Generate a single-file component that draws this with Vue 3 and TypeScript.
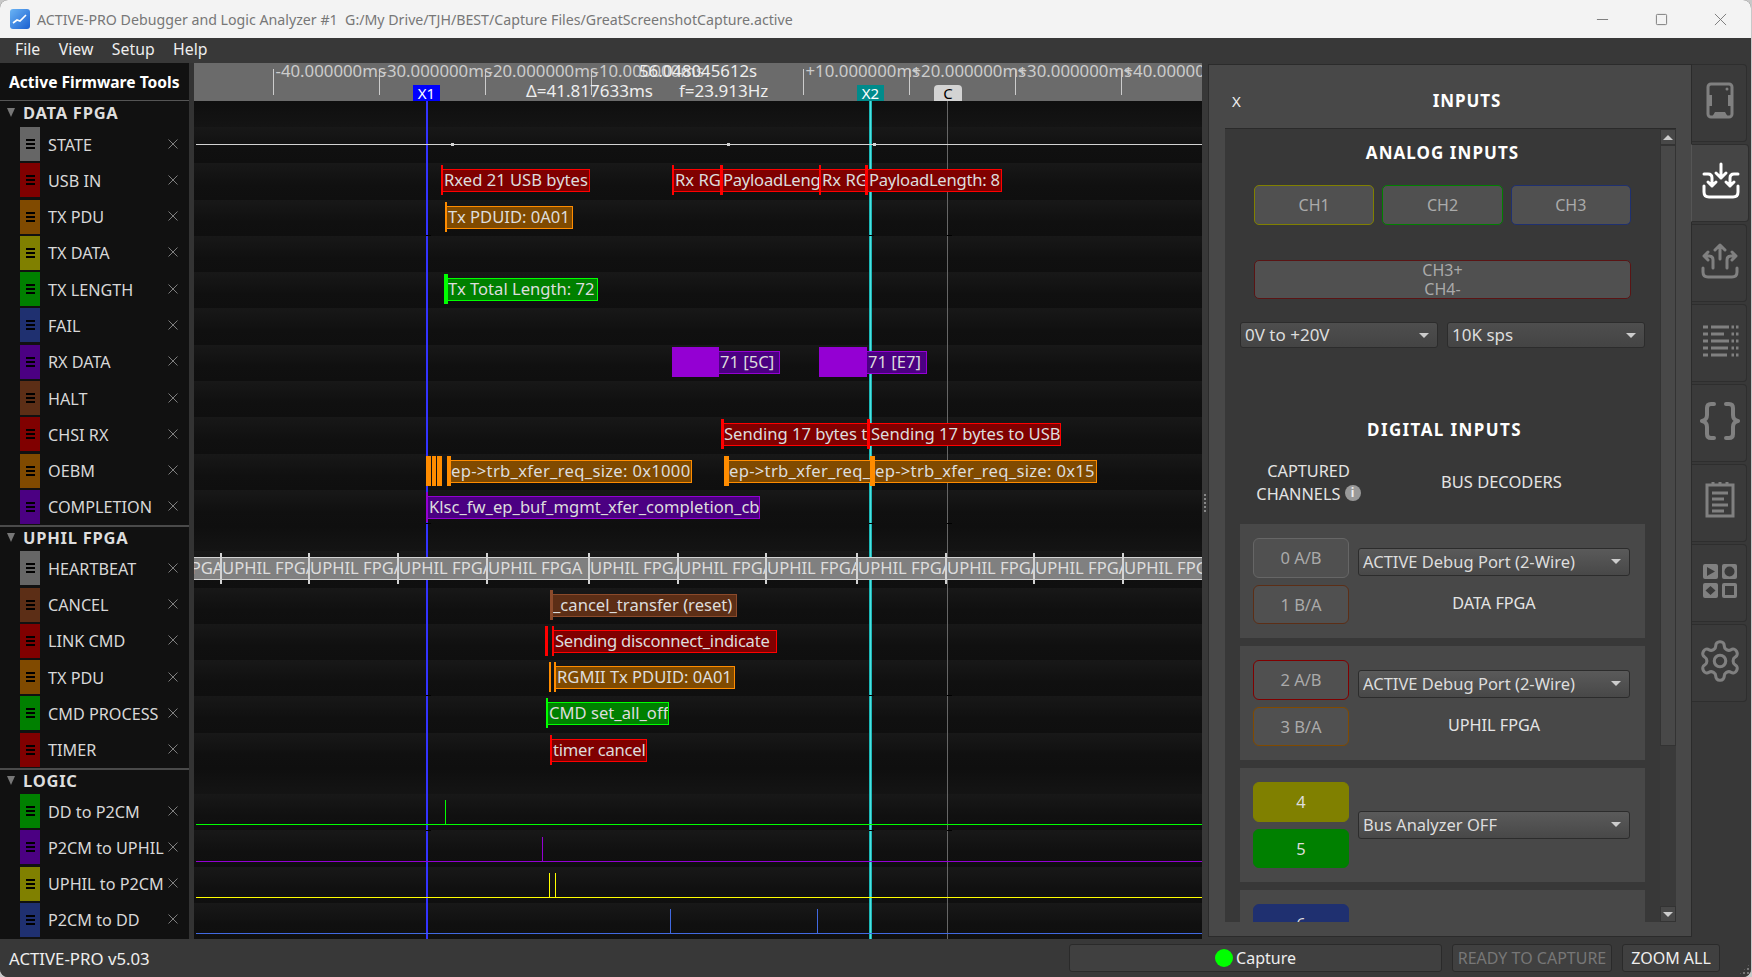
<script setup lang="ts">
type Kind = 'grey' | 'red' | 'orange' | 'olive' | 'green' | 'blue' | 'purple' | 'brown';

interface Box { x: number; end: number; text: string; fit?: 'loose' | 'tight' }
interface Lane {
  name: string;
  kind: Kind;
  marks?: [number, number][];
  boxes?: Box[];
  solids?: [number, number][];
  band?: boolean;
  line?: number;
  spikes?: number[];
}

const LEFT = 194;

const groups: { title: string; lanes: Lane[] }[] = [
  {
    title: 'DATA FPGA',
    lanes: [
      { name: 'STATE', kind: 'grey', line: 17 },
      {
        name: 'USB IN',
        kind: 'red',
        marks: [[441, 2], [672, 2], [720, 3], [819, 2], [865, 3]],
        boxes: [
          { x: 442, end: 590, text: 'Rxed 21 USB bytes' },
          { x: 673, end: 721, text: 'Rx RGMII' },
          { x: 721, end: 820, text: 'PayloadLength: 8', fit: 'tight' },
          { x: 820, end: 866, text: 'Rx RGMII' },
          { x: 867, end: 1002, text: 'PayloadLength: 8', fit: 'tight' },
        ],
      },
      {
        name: 'TX PDU',
        kind: 'orange',
        marks: [[445, 2]],
        boxes: [{ x: 446, end: 573, text: 'Tx PDUID: 0A01' }],
      },
      { name: 'TX DATA', kind: 'olive' },
      {
        name: 'TX LENGTH',
        kind: 'green',
        marks: [[444, 4]],
        boxes: [{ x: 446, end: 598, text: 'Tx Total Length: 72' }],
      },
      { name: 'FAIL', kind: 'blue' },
      {
        name: 'RX DATA',
        kind: 'purple',
        solids: [[672, 47], [819, 48]],
        boxes: [
          { x: 718, end: 780, text: '71 [5C]' },
          { x: 866, end: 927, text: '71 [E7]' },
        ],
      },
      { name: 'HALT', kind: 'brown' },
      {
        name: 'CHSI RX',
        kind: 'red',
        marks: [[721, 3], [867, 3]],
        boxes: [
          { x: 722, end: 868, text: 'Sending 17 bytes to USB' },
          { x: 869, end: 1061, text: 'Sending 17 bytes to USB' },
        ],
      },
      {
        name: 'OEBM',
        kind: 'orange',
        marks: [[447, 4], [724, 5], [870, 5]],
        solids: [[426, 5], [432, 4], [437, 5]],
        boxes: [
          { x: 449, end: 692, text: 'ep->trb_xfer_req_size: 0x1000', fit: 'loose' },
          { x: 727, end: 871, text: 'ep->trb_xfer_req_size: 0x15', fit: 'loose' },
          { x: 873, end: 1097, text: 'ep->trb_xfer_req_size: 0x15', fit: 'loose' },
        ],
      },
      {
        name: 'COMPLETION',
        kind: 'purple',
        marks: [[426, 2]],
        boxes: [{ x: 427, end: 760, text: 'Klsc_fw_ep_buf_mgmt_xfer_completion_cb' }],
      },
    ],
  },
  {
    title: 'UPHIL FPGA',
    lanes: [
      { name: 'HEARTBEAT', kind: 'grey', band: true },
      {
        name: 'CANCEL',
        kind: 'brown',
        marks: [[550, 3]],
        boxes: [{ x: 551, end: 737, text: '_cancel_transfer (reset)' }],
      },
      {
        name: 'LINK CMD',
        kind: 'red',
        marks: [[545, 3], [552, 2]],
        boxes: [{ x: 553, end: 777, text: 'Sending disconnect_indicate', fit: 'tight' }],
      },
      {
        name: 'TX PDU',
        kind: 'orange',
        marks: [[549, 2], [554, 2]],
        boxes: [{ x: 555, end: 735, text: 'RGMII Tx PDUID: 0A01' }],
      },
      {
        name: 'CMD PROCESS',
        kind: 'green',
        marks: [[546, 2]],
        boxes: [{ x: 547, end: 669, text: 'CMD set_all_off' }],
      },
      {
        name: 'TIMER',
        kind: 'red',
        marks: [[550, 2]],
        boxes: [{ x: 551, end: 647, text: 'timer cancel', fit: 'tight' }],
      },
    ],
  },
  {
    title: 'LOGIC',
    lanes: [
      { name: 'DD to P2CM', kind: 'green', line: 30, spikes: [445] },
      { name: 'P2CM to UPHIL', kind: 'purple', line: 31, spikes: [542] },
      { name: 'UPHIL to P2CM', kind: 'olive', line: 30, spikes: [549, 555] },
      { name: 'P2CM to DD', kind: 'blue', line: 30, spikes: [670, 817] },
    ],
  },
];

const rulerTicks = [
  { x: 272.5, label: '-40.000000ms' },
  { x: 378.5, label: '-30.000000ms' },
  { x: 484.5, label: '-20.000000ms' },
  { x: 590.5, label: '-10.000000ms' },
  { x: 802.5, label: '+10.000000ms' },
  { x: 908.5, label: '+20.000000ms' },
  { x: 1014.5, label: '+30.000000ms' },
  { x: 1120.5, label: '+40.000000ms' },
];

const stateDots = [451, 727, 873];
const bandTicks = [127, 220, 308, 397, 486, 588, 677, 765, 856, 945, 1033, 1122];
const nicks = [172, 460, 632, 767];
const cursorXs = [426, 869, 947];

const at = (x: number) => ({ left: `${x - LEFT}px` });
const span = (x: number, w: number) => ({ left: `${x - LEFT}px`, width: `${w}px` });
</script>

<template>
  <div class="window">
    <header class="titlebar">
      <svg class="app-icon" viewBox="0 0 20 20">
        <defs>
          <linearGradient id="appBlue" x1="0" y1="0" x2="1" y2="1">
            <stop offset="0" stop-color="#6ab4f5" />
            <stop offset="1" stop-color="#1a5fd0" />
          </linearGradient>
        </defs>
        <rect width="20" height="20" rx="3" fill="url(#appBlue)" />
        <path d="M3 14 L7 11 L10 12 L16 6" fill="none" stroke="#fff" stroke-width="1.6" />
      </svg>
      <span class="title-text">ACTIVE-PRO Debugger and Logic Analyzer #1&nbsp; G:/My Drive/TJH/BEST/Capture Files/GreatScreenshotCapture.active</span>
      <div class="win-buttons">
        <svg viewBox="0 0 14 14" class="win-btn"><path d="M1 7 H13" /></svg>
        <svg viewBox="0 0 14 14" class="win-btn"><rect x="1.5" y="1.5" width="11" height="11" rx="1" /></svg>
        <svg viewBox="0 0 14 14" class="win-btn"><path d="M1 1 L13 13 M13 1 L1 13" /></svg>
      </div>
    </header>

    <nav class="menubar">
      <span>File</span><span>View</span><span>Setup</span><span>Help</span>
    </nav>

    <div class="workspace">
      <aside class="channels">
        <div class="channels-head">Active Firmware Tools</div>
        <section v-for="g in groups" :key="g.title" class="group">
          <div class="group-head"><i class="tri"></i>{{ g.title }}</div>
          <div v-for="l in g.lanes" :key="l.name" class="channel">
            <div class="swatch" :class="`sw-${l.kind}`"><i></i><i></i><i></i></div>
            <span class="channel-name">{{ l.name }}</span>
            <span class="channel-x">
              <svg viewBox="0 0 10 10"><path d="M0.5 0.5 L9.5 9.5 M9.5 0.5 L0.5 9.5" /></svg>
            </span>
          </div>
        </section>
      </aside>
      <div class="splitter"></div>

      <main class="timeline">
        <div class="ruler">
          <template v-for="t in rulerTicks" :key="t.x">
            <i class="tick" :style="at(t.x)"></i>
            <span class="tick-label" :style="at(t.x + 3)">{{ t.label }}</span>
          </template>
          <span class="readout r-center">56.048045612s</span>
          <span class="readout r-delta">Δ=41.817633ms</span>
          <span class="readout r-freq">f=23.913Hz</span>
          <span class="flag flag-x1">X1</span>
          <span class="flag flag-x2">X2</span>
          <span class="flag flag-c">C</span>
        </div>

        <i class="cursor cursor-x1"></i>
        <i class="cursor cursor-x2"></i>
        <i class="cursor cursor-c"></i>
        <template v-for="c in cursorXs" :key="c">
          <i v-for="n in nicks" :key="n" class="nick" :style="{ ...at(c), top: `${n}px` }"></i>
        </template>

        <section v-for="g in groups" :key="g.title">
          <div class="lane-spacer"></div>
          <div v-for="l in g.lanes" :key="l.name + g.title" class="lane" :class="`k-${l.kind}`">
            <i v-if="l.line !== undefined" class="trace" :style="{ top: `${l.line}px` }"></i>
            <template v-if="l.name === 'STATE'">
              <i v-for="d in stateDots" :key="d" class="dot" :style="at(d)"></i>
            </template>
            <i
              v-for="s in l.spikes"
              :key="s"
              class="spike"
              :style="{ ...at(s), top: `${(l.line ?? 29) - 24}px` }"
            ></i>
            <i v-for="s in l.solids" :key="s[0]" class="solid" :style="span(s[0], s[1])"></i>
            <div
              v-for="b in l.boxes"
              :key="b.x"
              class="box"
              :class="b.fit"
              :style="span(b.x, b.end - b.x)"
            >{{ b.text }}</div>
            <i v-for="m in l.marks" :key="m[0]" class="mark" :style="span(m[0], m[1])"></i>
            <template v-if="l.band">
              <div
                v-for="(t, i) in bandTicks"
                :key="t"
                class="band-cell"
                :style="span(t, (bandTicks[i + 1] ?? 1300) - t)"
              >UPHIL FPGA</div>
              <i v-for="t in bandTicks.slice(1)" :key="t" class="band-tick" :style="at(t)"></i>
            </template>
          </div>
        </section>
      </main>

      <div class="gutter"><i class="grip"></i></div>

      <section class="panel">
        <div class="panel-head">
          <span class="panel-x">X</span>
          <span class="panel-title">INPUTS</span>
        </div>
        <div class="scroller">
          <div class="scroll-body">
            <h3 class="section-title analog-title">ANALOG INPUTS</h3>
            <div class="ch-row">
              <button class="ch ch-olive">CH1</button>
              <button class="ch ch-green">CH2</button>
              <button class="ch ch-blue">CH3</button>
            </div>
            <button class="ch ch-diff">CH3+<br />CH4-</button>
            <div class="select-row">
              <div class="select">0V to +20V</div>
              <div class="select">10K sps</div>
            </div>

            <h3 class="section-title digital-title">DIGITAL INPUTS</h3>
            <div class="digital-head">
              <div class="captured">
                CAPTURED<br />CHANNELS <span class="info">i</span>
              </div>
              <div class="decoders">BUS DECODERS</div>
            </div>

            <div class="card">
              <div class="pins">
                <button class="pin pin-grey">0 A/B</button>
                <button class="pin pin-brown">1 B/A</button>
              </div>
              <div class="decoder">
                <div class="select wide">ACTIVE Debug Port (2-Wire)</div>
                <div class="decoder-name">DATA FPGA</div>
              </div>
            </div>
            <div class="card">
              <div class="pins">
                <button class="pin pin-red">2 A/B</button>
                <button class="pin pin-orange">3 B/A</button>
              </div>
              <div class="decoder">
                <div class="select wide">ACTIVE Debug Port (2-Wire)</div>
                <div class="decoder-name">UPHIL FPGA</div>
              </div>
            </div>
            <div class="card">
              <div class="pins">
                <button class="pin on-olive">4</button>
                <button class="pin on-green">5</button>
              </div>
              <div class="decoder centered">
                <div class="select wide">Bus Analyzer OFF</div>
              </div>
            </div>
            <div class="card">
              <div class="pins">
                <button class="pin on-blue">6</button>
                <button class="pin on-blue">7</button>
              </div>
            </div>
          </div>
          <div class="scrollbar">
            <div class="sb-btn"><i class="sb-up"></i></div>
            <div class="sb-thumb"></div>
            <div class="sb-track"></div>
            <div class="sb-btn"><i class="sb-down"></i></div>
          </div>
        </div>
      </section>

      <div class="tabs">
        <div class="tab">
          <svg viewBox="0 0 40 40" class="icon">
            <rect x="8" y="3" width="24" height="33" rx="3" class="st" />
            <path d="M8 14 H12 V25 H8 Z M32 14 H28 V25 H32 Z M12 36 L15 31 H25 L28 36 Z" class="fl" />
            <circle cx="27" cy="8" r="1.5" class="fl" />
          </svg>
        </div>
        <div class="tab active">
          <svg viewBox="0 0 40 40" class="icon">
            <path
              d="M20 3 V17 M15 12 L20 17 L25 12 M3 13 H7 Q11 13 11 17 V25 M7 21 L11 25 L15 21 M37 13 H33 Q29 13 29 17 V25 M25 21 L29 25 L33 21 M3 25 V31 Q3 36 8 36 H32 Q37 36 37 31 V25"
              class="st"
            />
          </svg>
        </div>
        <div class="tab">
          <svg viewBox="0 0 40 40" class="icon">
            <path
              d="M20 18 V4 M15 9 L20 4 L25 9 M13 27 V19 Q13 15 9 15 H4 M8 11 L4 15 L8 19 M27 27 V19 Q27 15 31 15 H36 M32 11 L36 15 L32 19 M3 27 V31 Q3 36 8 36 H32 Q37 36 37 31 V27"
              class="st"
            />
          </svg>
        </div>
        <div class="tab">
          <svg viewBox="0 0 40 40" class="icon">
            <path
              d="M3 6 H8 M11 6 H29 M31.5 6 H34 M36 6 H38.5 M3 13 H8 M11 13 H24 M31.5 13 H34 M36 13 H38.5 M3 20 H8 M11 20 H29 M31.5 20 H34 M36 20 H38.5 M3 27 H8 M11 27 H28 M31.5 27 H34 M36 27 H38.5 M3 34 H8 M11 34 H27 M31.5 34 H34 M36 34 H38.5"
              class="st butt"
            />
          </svg>
        </div>
        <div class="tab">
          <svg viewBox="0 0 40 40" class="icon">
            <path
              d="M14 3 H11 Q7 3 7 7 V14 Q7 19 2 20 Q7 21 7 26 V33 Q7 37 11 37 H14 M26 3 H29 Q33 3 33 7 V14 Q33 19 38 20 Q33 21 33 26 V33 Q33 37 29 37 H26"
              class="st thick"
            />
          </svg>
        </div>
        <div class="tab">
          <svg viewBox="0 0 40 40" class="icon note">
            <rect x="7" y="6" width="26" height="31" class="st butt" />
            <path d="M13 3 V7 M20 3 V7 M27 3 V7 M12 14 H28 M12 20 H24 M12 26 H28 M12 32 H24" class="st butt" />
          </svg>
        </div>
        <div class="tab">
          <svg viewBox="0 0 40 40" class="icon">
            <rect x="3" y="3" width="15" height="15" rx="2" class="fl" />
            <rect x="22" y="3" width="15" height="15" rx="2" class="fl" />
            <rect x="3" y="22" width="15" height="15" rx="2" class="fl" />
            <rect x="22" y="22" width="15" height="15" rx="2" class="fl" />
            <path d="M7 6 L15 10.5 L7 15 Z M10.5 25 L15.5 29.5 L10.5 34 L5.5 29.5 Z" class="cut" />
            <circle cx="29.5" cy="10.5" r="5" class="cut" />
            <rect x="25" y="25" width="9" height="9" class="cut" />
          </svg>
        </div>
        <div class="tab">
          <svg viewBox="0 0 24 24" class="icon gear">
            <path
              d="M12.22 2h-.44a2 2 0 0 0-2 2v.18a2 2 0 0 1-1 1.73l-.43.25a2 2 0 0 1-2 0l-.15-.08a2 2 0 0 0-2.73.73l-.22.38a2 2 0 0 0 .73 2.73l.15.1a2 2 0 0 1 1 1.72v.51a2 2 0 0 1-1 1.74l-.15.09a2 2 0 0 0-.73 2.73l.22.38a2 2 0 0 0 2.73.73l.15-.08a2 2 0 0 1 2 0l.43.25a2 2 0 0 1 1 1.73V20a2 2 0 0 0 2 2h.44a2 2 0 0 0 2-2v-.18a2 2 0 0 1 1-1.73l.43-.25a2 2 0 0 1 2 0l.15.08a2 2 0 0 0 2.73-.73l.22-.39a2 2 0 0 0-.73-2.73l-.15-.08a2 2 0 0 1-1-1.74v-.5a2 2 0 0 1 1-1.74l.15-.09a2 2 0 0 0 .73-2.73l-.22-.38a2 2 0 0 0-2.73-.73l-.15.08a2 2 0 0 1-2 0l-.43-.25a2 2 0 0 1-1-1.73V4a2 2 0 0 0-2-2z"
              class="st"
            />
            <circle cx="12" cy="12" r="3" class="st" />
          </svg>
        </div>
      </div>
    </div>

    <footer class="statusbar">
      <span class="version">ACTIVE-PRO v5.03</span>
      <button class="capture"><i class="led"></i>Capture</button>
      <button class="ready">READY TO CAPTURE</button>
      <button class="zoomall">ZOOM ALL</button>
      <i class="resize-grip"></i>
    </footer>
  </div>
</template>

<style scoped>
.window {
  display: flex;
  flex-direction: column;
  width: 1751px;
  height: 977px;
  overflow: hidden;
  font-family: "Noto Sans", "Liberation Sans", sans-serif;
  font-size: 16.2px;
  color: #d8d8d8;
  background: #383838;
  border-radius: 8px;
}

.titlebar {
  display: flex;
  flex: none;
  align-items: center;
  height: 38px;
  padding-left: 10px;
  color: #777;
  background: #f3f3f3;
}

.app-icon {
  width: 20px;
  height: 20px;
  margin-right: 7px;
}

.title-text {
  font-size: 14.2px;
  white-space: nowrap;
}

.win-buttons {
  display: flex;
  gap: 46px;
  align-items: center;
  margin-left: auto;
  margin-right: 24px;
}

.win-btn {
  width: 13px;
  height: 13px;
  fill: none;
  stroke: #777;
  stroke-width: 1;
}

.menubar {
  display: flex;
  flex: none;
  gap: 18.5px;
  align-items: center;
  height: 25px;
  padding-left: 15px;
  padding-bottom: 4px;
  box-sizing: border-box;
  font-size: 15.8px;
  color: #eee;
  background: #383838;
}

.workspace {
  display: flex;
  flex: none;
  height: 876px;
  overflow: hidden;
}

.channels {
  flex: none;
  width: 189px;
  background: #111;
}

.channels-head {
  display: flex;
  align-items: center;
  height: 38px;
  padding-left: 9px;
  font-size: 15.6px;
  font-weight: 700;
  color: #fff;
  white-space: nowrap;
  border-bottom: 1px solid #555;
  box-sizing: border-box;
}

.group-head {
  display: flex;
  align-items: center;
  height: 25px;
  padding-left: 7px;
  padding-bottom: 2px;
  font-size: 16.5px;
  font-weight: 700;
  color: #ddd;
  letter-spacing: 0.75px;
  box-sizing: border-box;
}

.group + .group .group-head {
  border-top: 2px solid #4a4a4a;
}

.tri {
  width: 0;
  height: 0;
  margin-right: 8px;
  border-top: 9px solid #777;
  border-right: 4px solid transparent;
  border-left: 4px solid transparent;
}

.channel {
  display: flex;
  align-items: flex-start;
  height: 36.3px;
  padding-left: 20px;
  box-sizing: border-box;
}

.swatch {
  display: flex;
  flex: none;
  flex-direction: column;
  gap: 2px;
  align-items: center;
  justify-content: center;
  width: 20px;
  height: 34px;
  margin-top: 1px;
}

.swatch i {
  display: block;
  width: 9px;
  height: 2px;
  background: #000;
}

.sw-grey { background: #666; }
.sw-red { background: #800000; }
.sw-orange { background: #804a00; }
.sw-olive { background: #808000; }
.sw-green { background: #008000; }
.sw-blue { background: #1f3070; }
.sw-purple { background: #4b0082; }
.sw-brown { background: #5c2e16; }

.channel-name {
  flex: 1;
  margin-top: 7.5px;
  margin-left: 8px;
  white-space: nowrap;
}

.channel-x {
  display: flex;
  flex: none;
  align-items: center;
  width: 10px;
  height: 35px;
  margin-right: 11px;
}

.channel-x svg {
  width: 10px;
  height: 10px;
  fill: none;
  stroke: #7e7e7e;
  stroke-width: 1;
}

.splitter {
  flex: none;
  width: 5px;
  background: #333;
}

.timeline {
  position: relative;
  flex: none;
  width: 1008px;
  overflow: hidden;
  background: #111;
}

.ruler {
  position: relative;
  z-index: 4;
  height: 38px;
  overflow: hidden;
  font-size: 16.8px;
  background: #6b6b6b;
}

.tick {
  position: absolute;
  top: 6px;
  width: 1px;
  height: 26px;
  background: #ccc;
}

.tick-label {
  position: absolute;
  top: -4px;
  color: #ccc;
  white-space: nowrap;
}

.readout {
  position: absolute;
  color: #eee;
  white-space: nowrap;
}

.r-center { top: -4px; left: 445px; }
.r-delta { top: 16px; left: 332px; font-size: 17px; }
.r-freq { top: 16px; left: 485px; font-size: 17px; }

.flag {
  position: absolute;
  top: 22px;
  height: 16px;
  font-size: 15px;
  line-height: 17px;
  text-align: center;
  color: #fff;
}

.flag-x1 { left: 219px; width: 27px; background: #00f; }
.flag-x2 { left: 663px; width: 27px; background: #008b8b; }
.flag-c {
  left: 740px;
  width: 28px;
  color: #000;
  background: #d3d3d3;
  border-radius: 4px 4px 0 0;
}

.cursor {
  position: absolute;
  top: 38px;
  bottom: 0;
  z-index: 1;
}

.cursor-x1 { left: 232px; width: 2px; background: #33f; }
.cursor-x2 {
  left: 675px;
  width: 3px;
  background: linear-gradient(90deg, #00a0a0, #4fe0e0, #00a0a0);
}
.cursor-c { left: 753px; width: 1px; background: #666; }

.nick {
  position: absolute;
  z-index: 1;
  width: 5px;
  height: 1px;
  background: #000;
}

.lane-spacer {
  height: 26px;
  background: linear-gradient(#0f0f0f, #141414);
}

section + section .lane-spacer {
  height: 25px;
}

.lane {
  position: relative;
  height: 36.3px;
  background: linear-gradient(#181818, #101010 60%, #0f0f0f);
}

.trace {
  position: absolute;
  right: 0;
  left: 2px;
  z-index: 2;
  height: 1px;
}

.k-grey .trace { background: #d3d3d3; }
.k-green .trace, .k-green .spike { background: #0f0; }
.k-purple .trace, .k-purple .spike { background: #9400d3; }
.k-olive .trace, .k-olive .spike { background: #ff0; }
.k-blue .trace, .k-blue .spike { background: #4169e1; }

.dot {
  position: absolute;
  top: 16px;
  z-index: 2;
  width: 3px;
  height: 3px;
  background: #d3d3d3;
}

.spike {
  position: absolute;
  z-index: 2;
  width: 1px;
  height: 24px;
}

.box {
  position: absolute;
  top: 6px;
  z-index: 2;
  box-sizing: border-box;
  height: 23px;
  padding-left: 1px;
  overflow: hidden;
  font-size: 16.6px;
  line-height: 19px;
  color: #ddd;
  white-space: nowrap;
  border: 1px solid;
}

.box.loose { letter-spacing: 0.3px; }
.box.tight { letter-spacing: -0.25px; }

.mark {
  position: absolute;
  top: 2px;
  z-index: 3;
  height: 30px;
}

.solid {
  position: absolute;
  top: 2px;
  z-index: 2;
  height: 30px;
}

.k-red .box { background: #800000; border-color: #f00; }
.k-red .mark { background: #f00; }
.k-orange .box { background: #804a00; border-color: #ff8c00; }
.k-orange .mark, .k-orange .solid { background: #ff8c00; }
.k-green .box { background: #008000; border-color: #0f0; }
.k-green .mark { background: #0f0; }
.k-purple .box { background: #4b0082; border-color: #9400d3; }
.k-purple .mark, .k-purple .solid { background: #9400d3; }
.k-brown .box { background: #5c2e16; border-color: #8b4a2b; }
.k-brown .mark { background: #8b4a2b; }

.band-cell {
  position: absolute;
  top: 6px;
  z-index: 2;
  box-sizing: border-box;
  height: 23px;
  padding-left: 2px;
  overflow: hidden;
  font-size: 16.6px;
  line-height: 19px;
  color: #ddd;
  white-space: nowrap;
  background: #808080;
  border-top: 1px solid #d3d3d3;
  border-bottom: 1px solid #d3d3d3;
}

.band-tick {
  position: absolute;
  top: 2px;
  z-index: 3;
  width: 2px;
  height: 31px;
  background: #d3d3d3;
}

.gutter {
  position: relative;
  flex: none;
  width: 6px;
}

.grip {
  position: absolute;
  top: 431px;
  left: 2px;
  width: 2px;
  height: 18px;
  background: repeating-linear-gradient(#888 0 2px, transparent 2px 4px);
}

.panel {
  display: flex;
  flex: none;
  flex-direction: column;
  box-sizing: border-box;
  width: 484px;
  height: 873px;
  margin-top: 1px;
  padding: 0 15px 14px 16px;
  background: #484848;
  border: 1px solid #2b2b2b;
}

.panel-head {
  position: relative;
  display: flex;
  flex: none;
  align-items: center;
  justify-content: center;
  height: 63px;
  padding-top: 8px;
  box-sizing: border-box;
}

.panel-x {
  position: absolute;
  left: 7px;
  font-size: 15px;
  color: #eee;
}

.panel-title {
  margin-left: 33px;
  font-size: 17px;
  font-weight: 700;
  color: #fff;
  letter-spacing: 0.9px;
}

.scroller {
  display: flex;
  flex: 1;
  min-height: 0;
  background: #383838;
  border-top: 1px solid #2a2a2a;
}

.scroll-body {
  flex: 1;
  min-width: 0;
  overflow: hidden;
  padding: 0 15px;
}

.section-title {
  margin: 0;
  font-size: 17px;
  font-weight: 700;
  color: #fff;
  text-align: center;
}

.analog-title {
  padding-top: 13px;
  padding-bottom: 21px;
  line-height: 22px;
  letter-spacing: 1.05px;
}

.ch-row {
  display: flex;
  gap: 8px;
  margin: 0 14px;
}

.ch {
  display: block;
  flex: 1;
  box-sizing: border-box;
  height: 40px;
  padding: 0;
  font-family: inherit;
  font-size: 16px;
  line-height: 19px;
  color: #aaa;
  background: #505050;
  border: 1.5px solid;
  border-radius: 5px;
}

.ch-olive { border-color: #808000; }
.ch-green { border-color: #008000; }
.ch-blue { border-color: #1f3070; }

.ch-diff {
  width: calc(100% - 28px);
  height: 39px;
  margin: 35px 14px 0;
  border-color: #5a1414;
}

.select-row {
  display: flex;
  gap: 9px;
  margin-top: 23px;
}

.select {
  position: relative;
  flex: 1;
  box-sizing: border-box;
  height: 26px;
  padding-left: 4px;
  font-size: 17px;
  line-height: 24px;
  color: #ddd;
  background: linear-gradient(#4e4e4e, #444);
  border: 1px solid #2c2c2c;
  border-radius: 3px;
}

.select::after {
  position: absolute;
  top: 10px;
  right: 8px;
  width: 0;
  height: 0;
  content: "";
  border-top: 5px solid #ccc;
  border-right: 5px solid transparent;
  border-left: 5px solid transparent;
}

.digital-title {
  padding-top: 71px;
  padding-left: 4px;
  line-height: 22px;
  letter-spacing: 1.4px;
}

.digital-head {
  display: flex;
  align-items: center;
  height: 72px;
  margin-top: 6px;
  margin-bottom: 5px;
}

.captured {
  width: 130px;
  padding-left: 7px;
  font-size: 16.3px;
  line-height: 23px;
  text-align: center;
  color: #e4e4e4;
  box-sizing: border-box;
  white-space: nowrap;
}

.info {
  display: inline-block;
  width: 16px;
  height: 16px;
  font-size: 12px;
  font-weight: 700;
  line-height: 16px;
  text-align: center;
  vertical-align: 3px;
  color: #eee;
  background: #999;
  border-radius: 50%;
}

.decoders {
  margin-left: 71px;
  padding-bottom: 4px;
  color: #e4e4e4;
  font-size: 16.5px;
}

.card {
  display: flex;
  gap: 9px;
  align-items: stretch;
  box-sizing: border-box;
  height: 114px;
  padding: 14px 15px 14px 13px;
  margin-bottom: 8px;
  background: #484848;
}

.pins {
  display: flex;
  flex: none;
  flex-direction: column;
  gap: 7px;
  width: 96px;
}

.pin {
  box-sizing: border-box;
  flex: 1;
  padding: 0;
  font-family: inherit;
  font-size: 16.5px;
  color: #aaa;
  background: #505050;
  border: 1.5px solid;
  border-radius: 6px;
}

.pin-grey { border-color: #666; }
.pin-brown { border-color: #5c2e16; }
.pin-red { border-color: #800000; }
.pin-orange { border-color: #804a00; }
.on-olive { color: #ddd; background: #808000; border-color: #808000; }
.on-green { color: #ddd; background: #008000; border-color: #008000; }
.on-blue { color: #ddd; background: #1f3070; border-color: #1f3070; }

.decoder {
  display: flex;
  flex: 1;
  flex-direction: column;
  padding-top: 10px;
}

.decoder.centered {
  justify-content: center;
  padding-top: 0;
}

.select.wide {
  flex: none;
  height: 28px;
  font-size: 16.5px;
  line-height: 26px;
  background: linear-gradient(#5a5a5a, #484848);
}

.decoder-name {
  margin-top: 16px;
  color: #e4e4e4;
  text-align: center;
}

.scrollbar {
  display: flex;
  flex: none;
  flex-direction: column;
  width: 16px;
}

.sb-btn {
  display: flex;
  flex: none;
  align-items: center;
  justify-content: center;
  height: 16px;
  background: #484848;
  border: 1px solid #333;
  box-sizing: border-box;
}

.sb-up {
  border-right: 5px solid transparent;
  border-bottom: 5px solid #ccc;
  border-left: 5px solid transparent;
}

.sb-down {
  border-top: 5px solid #ccc;
  border-right: 5px solid transparent;
  border-left: 5px solid transparent;
}

.sb-thumb {
  flex: none;
  height: 601px;
  background: #484848;
  border: 1px solid #333;
  box-sizing: border-box;
}

.sb-track {
  flex: 1;
  background: #3a3a3a;
}

.tabs {
  display: flex;
  flex: none;
  flex-direction: column;
  gap: 2px;
  width: 58px;
  padding-top: 1px;
}

.tab {
  display: flex;
  flex: none;
  align-items: center;
  justify-content: center;
  box-sizing: border-box;
  width: 55px;
  height: 78px;
  padding-bottom: 4px;
  padding-left: 2px;
  color: #808080;
  background: #3a3a3a;
  border: 1px solid #2e2e2e;
  border-left: none;
  border-radius: 0 4px 4px 0;
}

.tab.active {
  width: 58px;
  margin-left: -1px;
  color: #fff;
  background: #454545;
  border-left: 1px solid #555;
}

.icon {
  width: 40px;
  height: 40px;
}

.icon.note {
  margin-bottom: 4px;
}

.icon.gear {
  width: 46px;
  height: 46px;
}

.st {
  fill: none;
  stroke: currentColor;
  stroke-width: 3;
  stroke-linecap: round;
  stroke-linejoin: round;
}

.butt {
  stroke-linecap: butt;
  stroke-linejoin: miter;
}

.thick { stroke-width: 4; }
.gear .st { stroke-width: 1.6; }
.fl { fill: currentColor; }
.cut { fill: #3a3a3a; }

.statusbar {
  position: relative;
  display: flex;
  flex: none;
  gap: 10px;
  align-items: center;
  height: 38px;
  padding: 0 31px 0 9px;
  background: #383838;
}

.version {
  margin-right: auto;
  font-size: 16.8px;
  color: #eee;
}

.statusbar button {
  box-sizing: border-box;
  height: 28px;
  padding: 0;
  font-family: inherit;
  font-size: 16px;
  background: #404040;
  border: 1px solid #2a2a2a;
  border-radius: 3px;
}

.capture {
  display: flex;
  align-items: center;
  justify-content: center;
  width: 373px;
  color: #eee;
}

.led {
  width: 18px;
  height: 18px;
  margin-right: 3px;
  background: #0f0;
  border-radius: 50%;
}

.ready {
  width: 160px;
  color: #777;
}

.zoomall {
  width: 98px;
  color: #eee;
}

.resize-grip {
  position: absolute;
  right: 0;
  bottom: 1px;
  width: 13px;
  height: 13px;
  background: radial-gradient(#777 1px, transparent 1.2px) 0 0 / 4px 4px;
  clip-path: polygon(100% 0, 100% 100%, 0 100%);
}
</style>

<style>
html, body {
  margin: 0;
  background: #c8c8c8;
}
</style>
